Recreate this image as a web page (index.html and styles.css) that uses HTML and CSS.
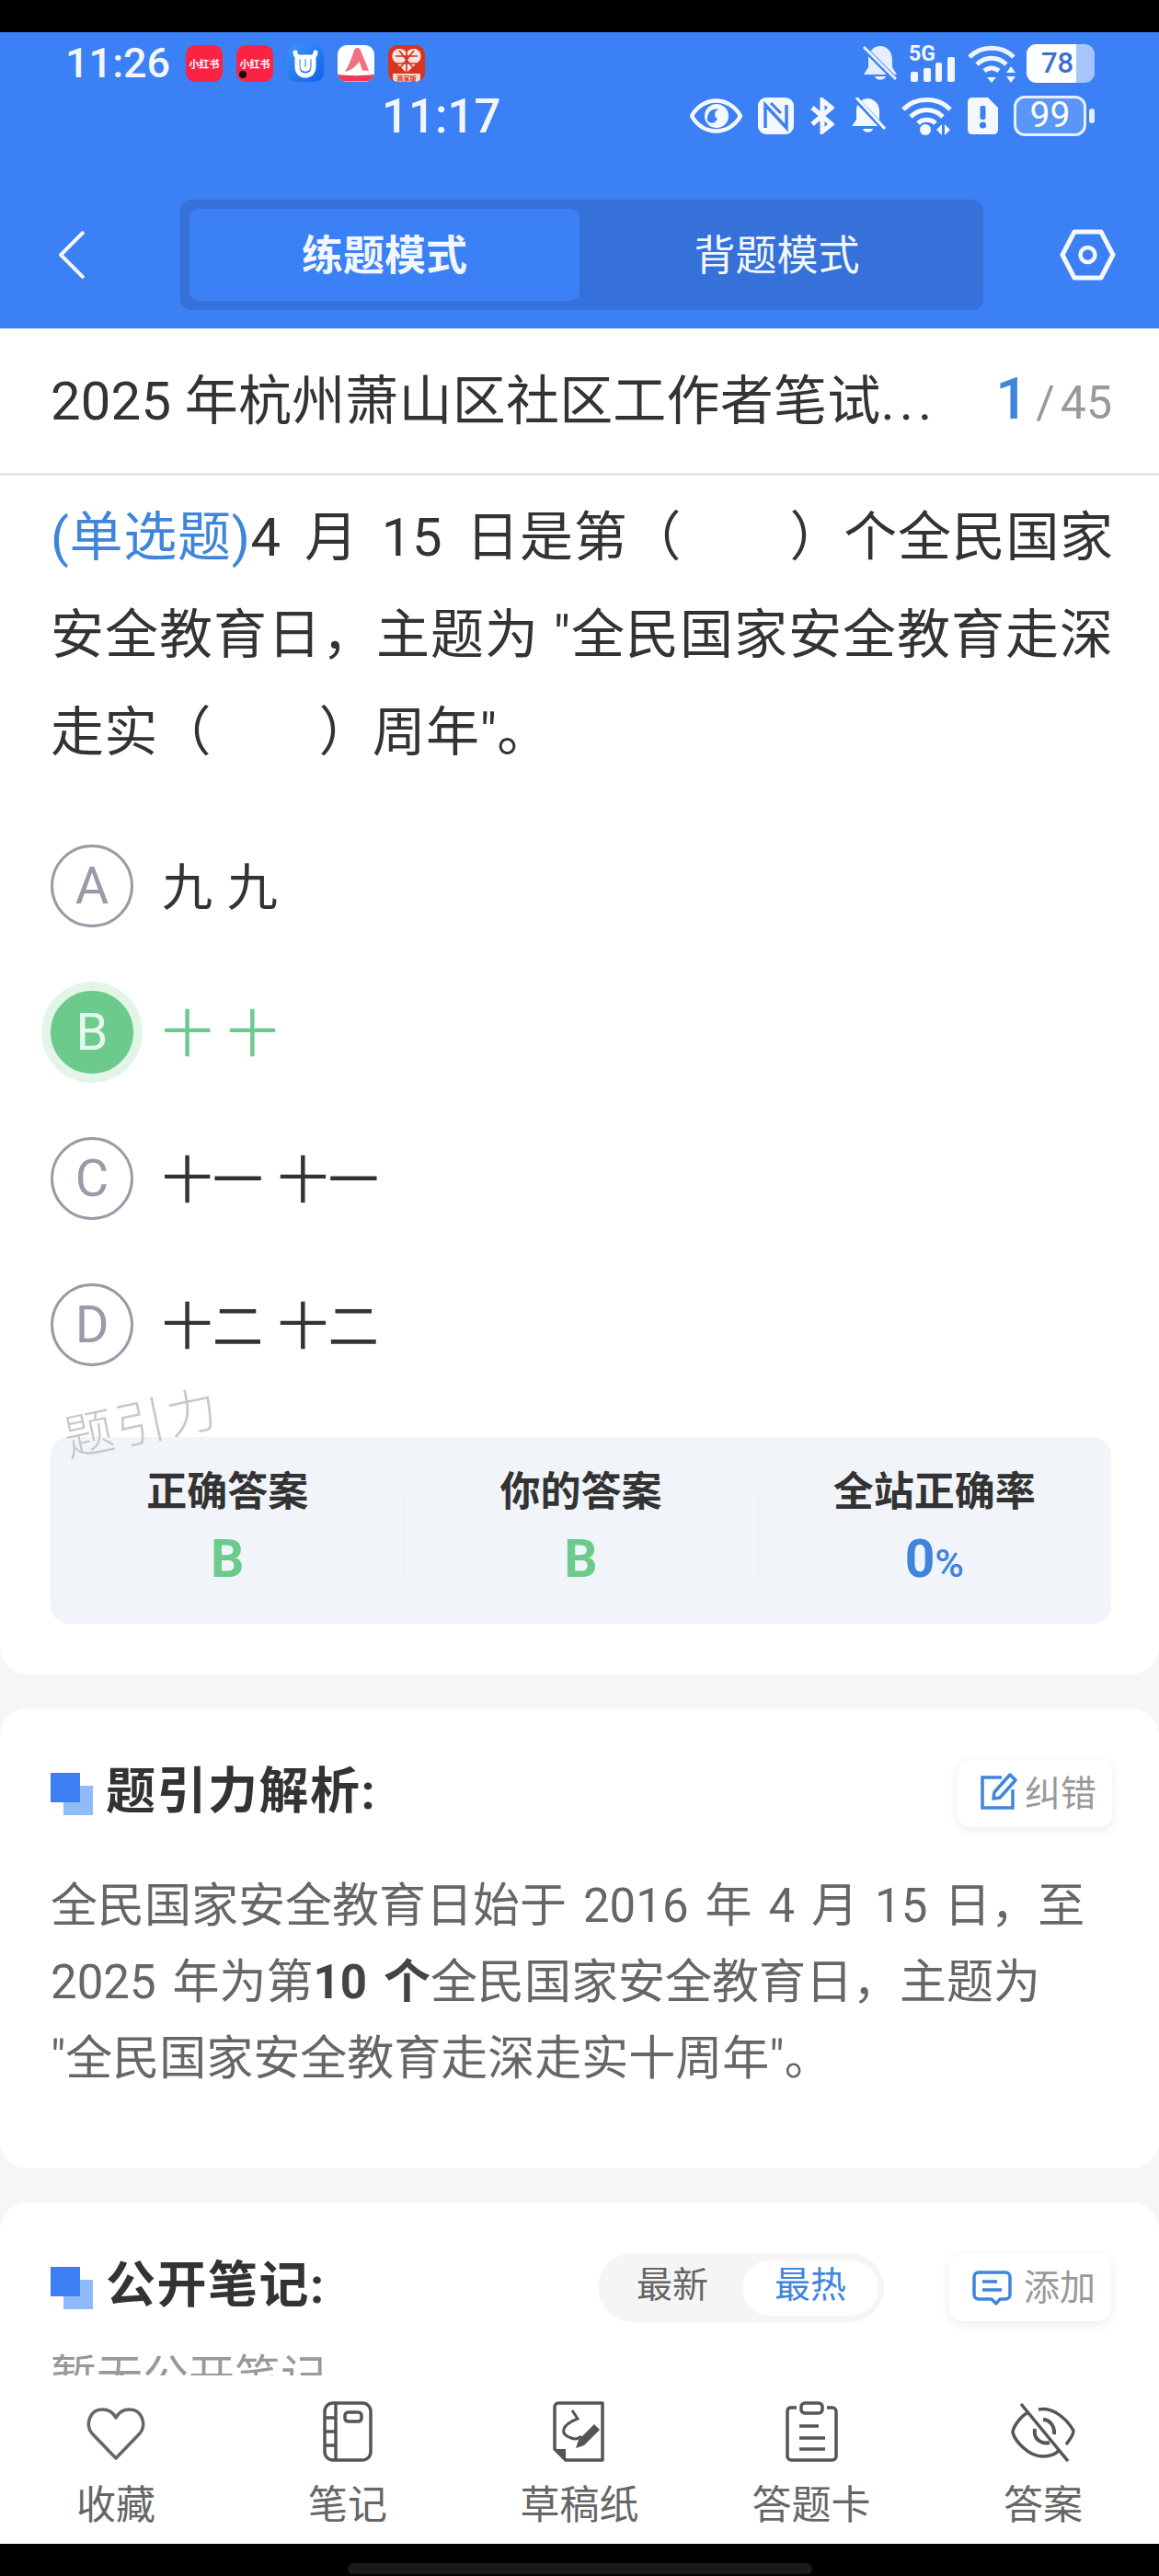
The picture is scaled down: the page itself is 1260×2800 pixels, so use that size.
FILE: index.html
```html
<!DOCTYPE html>
<html lang="zh-CN">
<head>
  <meta charset="UTF-8">
  <meta name="viewport" content="width=device-width, initial-scale=1.0">
  <title>题引力</title>
  <link rel="stylesheet" href="styles.css">
</head>
<body>
  <div class="top-black"></div>

  <header class="header">
    <div class="status-row">
      <span class="time-big">11:26</span>
      <div class="app-icon app-red"><span>小红书</span></div>
      <div class="app-icon app-red"><span>小红书</span><i class="rec-dot"></i></div>
      <div class="app-icon app-blue">
        <svg width="40" height="40" viewBox="0 0 40 40"><path d="M9 8 C9 11 11 13 13 13 H27 C29 13 31 11 31 8 M11 12 V23 C11 30 15 33 20 33 C25 33 29 30 29 23 V12 M17 17 V24 C17 27 23 27 23 24 V17" fill="none" stroke="#fff" stroke-width="5" stroke-linecap="round"/></svg>
      </div>
      <div class="app-icon app-white">
        <svg width="41" height="40" viewBox="0 0 41 40"><path d="M8 29 C13 22 16 12 19 4 C21 2 24 2 25 4 L35 28 L28 28 L24 18 C21 23 15 28 8 29 Z" fill="#f2707f"/><path d="M0 32 C10 34 30 34 41 32 V40 H0 Z" fill="#f0395a"/></svg>
      </div>
      <div class="app-icon app-pdd">
        <svg width="40" height="40" viewBox="0 0 40 40"><path d="M20 30 L6 17 C2 11 6 4 12 4 C15 4 18 5 20 8 C22 5 25 4 28 4 C34 4 38 11 34 17 Z" fill="#fbe3de"/><path d="M20 6 V30 M8 12 H32 M8 20 H32 M12 6 L28 26 M28 6 L12 26" stroke="#d5301e" stroke-width="1.6"/><path d="M5 31 H35 V36 C35 38 33 40 31 40 H9 C7 40 5 38 5 36 Z" fill="#fbd9d3"/><text x="20" y="38.500" class="pdd-text">商家版</text></svg>
      </div>
      <div class="status-right">
        <svg width="38" height="40" viewBox="0 0 38 40"><path d="M19 1 C27 1 32 8 32 16 V24 L37 32 H1 L6 24 V14 C6 7 12 1 19 1 Z M13 34 H25 C24 39 14 39 13 34 Z" fill="#e6efff"/><path d="M1 3 L36 38" stroke="#3b80f5" stroke-width="6"/><path d="M1 2 L36 37" stroke="#e6efff" stroke-width="3"/></svg>
        <svg class="net-icon" width="52" height="40" viewBox="0 0 52 40"><text x="0" y="17" class="net-text">5G</text><rect x="2" y="29" width="8" height="11" rx="2"/><rect x="16" y="25" width="8" height="15" rx="2"/><rect x="29" y="19" width="7" height="21" rx="2"/><rect x="42" y="13" width="8" height="27" rx="2"/></svg>
        <svg width="52" height="42" viewBox="0 0 52 42"><path d="M2 14 C15 1 37 1 50 14 M10 22 C19 13 33 13 42 22" fill="none" stroke="#eef4ff" stroke-width="5"/><path d="M18 29 C23 25 29 25 34 29" fill="none" stroke="#eef4ff" stroke-width="5"/><path d="M21 36 H31 L26 42 Z M42 31 L47 24 L52 31 Z M42 35 H52 L47 42 Z" fill="#eef4ff"/></svg>
        <div class="batt-top"><span class="batt-fill">78</span></div>
      </div>
    </div>

    <div class="status-row status-row-2">
      <span class="time-mid">11:17</span>
      <div class="status-right status-right-2">
        <svg width="57" height="38" viewBox="0 0 57 38"><path d="M2 19 C14 -3 43 -3 55 19 C43 41 14 41 2 19 Z" fill="none" stroke="#f4f8ff" stroke-width="4.500"/><circle cx="29" cy="19" r="13" fill="#f4f8ff"/><path d="M19 24 C18 15 25 10 31 12 C26 14 26 20 30 22 C27 28 22 28 19 24 Z" fill="#3b80f5"/></svg>
        <svg width="39" height="40" viewBox="0 0 39 40"><rect width="39" height="40" rx="9" fill="#f4f8ff"/><path d="M8 33 V8 L31 33 V8" fill="none" stroke="#3b80f5" stroke-width="3.500"/><path d="M14 6 L25 17" stroke="#3b80f5" stroke-width="3"/></svg>
        <svg width="27" height="40" viewBox="0 0 27 40"><path d="M3 11 L24 29 L14 37 V3 L24 11 L3 29" fill="none" stroke="#f4f8ff" stroke-width="5"/></svg>
        <svg width="39" height="40" viewBox="0 0 39 40"><path d="M20 1 C28 2 32 8 32 15 V24 L37 31 H2 L7 24 V14 C7 7 12 1 20 1 Z M14 34 H25 C24 39 15 39 14 34 Z" fill="#f4f8ff"/><path d="M5 0 L39 36" stroke="#3b80f5" stroke-width="6"/><path d="M7 0 L38 34" stroke="#f4f8ff" stroke-width="3"/></svg>
        <svg width="55" height="42" viewBox="0 0 55 42"><path d="M2 14 C15 0 40 0 53 14 M10 22 C20 12 35 12 45 22 M18 29 C23 24 32 24 37 29" fill="none" stroke="#f4f8ff" stroke-width="5"/><circle cx="26" cy="36" r="6" fill="#f4f8ff"/><path d="M44 30 V42 L38 36 Z M47 30 V42 L53 36 Z" fill="#f4f8ff"/></svg>
        <svg width="33" height="40" viewBox="0 0 33 40"><path d="M5 0 H22 L33 11 V35 C33 38 31 40 28 40 H5 C2 40 0 38 0 35 V5 C0 2 2 0 5 0 Z" fill="#f4f8ff"/><rect x="13.500" y="9" width="6" height="15" rx="2" fill="#3b80f5"/><circle cx="16.500" cy="30" r="3.600" fill="#3b80f5"/></svg>
        <div class="batt-mid"><span>99</span></div>
        <i class="batt-nub"></i>
      </div>
    </div>

    <nav class="nav">
      <svg class="nav-back" width="28" height="52" viewBox="0 0 28 52"><path d="M27 1 L2 26 L27 51" fill="none" stroke="#f4f8ff" stroke-width="4"/></svg>
      <div class="mode-tabs">
        <div class="mode-tab mode-active">练题模式</div>
        <div class="mode-tab">背题模式</div>
      </div>
      <svg class="nav-gear" width="61" height="56" viewBox="0 0 61 56"><path d="M3 28 L16 3 H45 L58 28 L45 53 H16 Z" fill="none" stroke="#f4f8ff" stroke-width="5" stroke-linejoin="round"/><circle cx="30.500" cy="28" r="8" fill="none" stroke="#f4f8ff" stroke-width="4.500"/></svg>
    </nav>
  </header>

  <div class="title-bar">
    <span class="paper-title">2025 年杭州萧山区社区工作者笔试<span class="dots">...</span></span>
    <span class="counter"><b>1</b><em>/</em><span>45</span></span>
  </div>

  <main class="scroll">
    <section class="card card-question">
      <p class="question">
        <span class="q-line q-line-1"><span class="q-type">(单选题)</span>4 月 15 日是第（　　）个全民国家</span>
        <span class="q-line q-line-2">安全教育日，主题为 "全民国家安全教育走深</span>
        <span class="q-line q-line-3">走实（　　）周年"。</span>
      </p>

      <div class="options">
        <div class="option"><span class="opt-badge">A</span><span class="opt-text">九 九</span></div>
        <div class="option option-right"><span class="opt-badge">B</span><span class="opt-text">十 十</span></div>
        <div class="option"><span class="opt-badge">C</span><span class="opt-text">十一 十一</span></div>
        <div class="option"><span class="opt-badge">D</span><span class="opt-text">十二 十二</span></div>
      </div>

      <div class="stats">
        <span class="watermark">题引力</span>
        <div class="stat">
          <div class="stat-label">正确答案</div>
          <div class="stat-value green">B</div>
        </div>
        <div class="stat stat-line">
          <div class="stat-label">你的答案</div>
          <div class="stat-value green">B</div>
        </div>
        <div class="stat stat-line">
          <div class="stat-label">全站正确率</div>
          <div class="stat-value blue">0<small>%</small></div>
        </div>
      </div>
    </section>

    <section class="card card-analysis">
      <div class="card-head">
        <i class="squares"></i>
        <h2>题引力解析:</h2>
        <div class="chip">
          <svg width="40" height="40" viewBox="0 0 40 40"><path d="M23 5 H2 V38 H35 V18" fill="none" stroke="#3f85dc" stroke-width="3.500"/><path d="M15 21 L32 2 L38 8 L21 27 L14 28 Z" fill="none" stroke="#3f85dc" stroke-width="3.500" stroke-linejoin="round"/></svg>
          <span>纠错</span>
        </div>
      </div>
      <p class="analysis"><span class="a-line">全民国家安全教育日始于 2016 年 4 月 15 日，至</span><br><span class="a-line">2025 年为第<b>10 个</b>全民国家安全教育日，主题为</span><br>"全民国家安全教育走深走实十周年"。</p>
    </section>

    <section class="card card-notes">
      <div class="card-head card-head-notes">
        <i class="squares"></i>
        <h2>公开笔记:</h2>
        <div class="sort-pill">
          <span class="sort-item">最新</span>
          <span class="sort-item sort-active">最热</span>
        </div>
        <div class="chip chip-add">
          <svg width="43" height="38" viewBox="0 0 43 38"><path d="M7 2 H36 C39 2 41 4 41 7 V26 C41 29 39 31 36 31 H30 L26 36 L21 31 H7 C4 31 2 29 2 26 V7 C2 4 4 2 7 2 Z" fill="none" stroke="#3f85dc" stroke-width="3.500" stroke-linejoin="round"/><path d="M11 12 H27 M11 21 H32" stroke="#3f85dc" stroke-width="3.500"/></svg>
          <span>添加</span>
        </div>
      </div>
      <p class="empty">暂无公开笔记</p>
    </section>
  </main>

  <footer class="tabbar">
    <div class="tab-item">
      <svg width="70" height="66" viewBox="0 0 70 66"><path d="M35 62 L9 35 C1 25 7 9 20 9 C27 9 32 12 35 18 C38 12 43 9 50 9 C63 9 69 25 61 35 Z" fill="none" stroke="#666" stroke-width="3.500" stroke-linejoin="round"/></svg>
      <span>收藏</span>
    </div>
    <div class="tab-item">
      <svg width="70" height="66" viewBox="0 0 70 66"><rect x="10" y="2" width="50" height="62" rx="9" fill="none" stroke="#555" stroke-width="3.500"/><path d="M22 2 V64 M10 18 H22 M10 33 H22 M10 48 H22" stroke="#555" stroke-width="3.500"/><rect x="32" y="12" width="18" height="10" rx="3.500" fill="none" stroke="#555" stroke-width="3.500"/></svg>
      <span>笔记</span>
    </div>
    <div class="tab-item">
      <svg width="70" height="66" viewBox="0 0 70 66"><path d="M12 2 H60 V64 H20 L8 52 V6 C8 4 10 2 12 2 Z" fill="none" stroke="#555" stroke-width="3.500" stroke-linejoin="round"/><path d="M9 52 H20 V63 Z" fill="#555"/><path d="M27 10 L33 19 C15 26 13 36 26 40 C31 42 34 41 37 38" fill="none" stroke="#555" stroke-width="3"/><path d="M31 51 L34 42 L51 25 L57 31 L40 48 Z" fill="#555"/></svg>
      <span>草稿纸</span>
    </div>
    <div class="tab-item">
      <svg width="70" height="66" viewBox="0 0 70 66"><path d="M19 7 H13 C10 7 9 9 9 11 V60 C9 62 11 64 13 64 H58 C60 64 62 62 62 60 V11 C62 9 60 7 58 7 H52" fill="none" stroke="#555" stroke-width="3.500"/><rect x="24" y="2" width="23" height="11" rx="4" fill="none" stroke="#555" stroke-width="3.500"/><path d="M22 27 H43 M22 40 H50 M22 52 H50" stroke="#555" stroke-width="3.500"/></svg>
      <span>答题卡</span>
    </div>
    <div class="tab-item">
      <svg width="70" height="66" viewBox="0 0 70 66"><path d="M19 12 C8 18 2 30 2 34 C4 42 18 60 35 60 C43 60 49 57 53 53 M30 9 C45 6 60 18 68 32 C68 36 64 42 60 47" fill="none" stroke="#555" stroke-width="3.500"/><path d="M11 3 L62 65" stroke="#555" stroke-width="3.500"/><path d="M26 30 C24 42 34 47 42 45 M35 20 C42 20 48 27 47 36" fill="none" stroke="#555" stroke-width="4"/></svg>
      <span>答案</span>
    </div>
  </footer>

  <div class="bottom-black"><i class="home-bar"></i></div>
</body>
</html>
```

FILE: styles.css
```css
* {
  box-sizing: border-box;
}
body {
  margin: 0;
  width: 1260px;
  height: 2800px;
  overflow: hidden;
  display: flex;
  flex-direction: column;
  background-color: #f5f6f8;
  font-family: Roboto, "Noto Sans CJK SC", sans-serif;
  color: #333;
}
.top-black {
  height: 35px;
  background-color: #000;
}

/* header + status bars */
.header {
  height: 322px;
  padding-top: 13px;
  background-color: #3b80f5;
  color: #f2f7ff;
}
.status-row {
  display: flex;
  align-items: center;
  height: 41px;
  padding-left: 71px;
  padding-right: 70px;
}
.status-row-2 {
  height: 44px;
  margin-top: 15px;
}
.time-big {
  width: 131px;
  font-size: 45px;
  font-weight: 500;
  line-height: 40px;
}
.time-mid {
  margin-left: 344px;
  margin-top: 2px;
  font-size: 51px;
  font-weight: 500;
  line-height: 44px;
}
.app-icon {
  position: relative;
  display: flex;
  align-items: center;
  justify-content: center;
  width: 40px;
  height: 40px;
  margin-right: 15px;
  border-radius: 10px;
  overflow: hidden;
  font-size: 11px;
  font-weight: 700;
  color: #fff;
}
.app-red {
  background-color: #fb2343;
}
.app-blue {
  background: linear-gradient(135deg, #3f94f8, #0f62e8);
}
.app-white {
  background-color: #fff;
}
.app-pdd {
  background-color: #d8341f;
}
.pdd-text {
  font-size: 7px;
  text-anchor: middle;
  fill: #d5301e;
}
.rec-dot {
  position: absolute;
  left: 3px;
  bottom: 4px;
  width: 8px;
  height: 8px;
  border-radius: 50%;
  background-color: #111;
}
.status-right {
  display: flex;
  align-items: center;
  gap: 12px;
  margin-left: auto;
}
.status-right-2 {
  gap: 17px;
}
.net-icon {
  overflow: visible;
}
.net-text {
  font-size: 23px;
  font-weight: 700;
  fill: #f2f7ff;
}
.net-icon rect {
  fill: #f2f7ff;
}
.batt-top {
  width: 74px;
  height: 42px;
  border-radius: 11px;
  background-color: #a6c5fb;
  overflow: hidden;
}
.batt-fill {
  display: block;
  width: 54px;
  height: 42px;
  padding-left: 16px;
  background-color: #fff;
  font-size: 31px;
  font-weight: 500;
  line-height: 42px;
  color: #3a6fd0;
}
.batt-mid {
  width: 79px;
  height: 44px;
  margin-right: -13px;
  border: 3px solid #e6efff;
  border-radius: 12px;
  background-color: #5a96f6;
  text-align: center;
  font-size: 39px;
  line-height: 37px;
  color: #fff;
}
.batt-nub {
  width: 6px;
  height: 16px;
  margin-left: -1px;
  border-radius: 3px;
  background-color: #e6efff;
}
.nav {
  display: flex;
  align-items: center;
  margin-top: 69px;
  padding-left: 64px;
}
.nav-back {
  margin-right: 104px;
}
.nav-gear {
  margin-left: 83px;
}
.mode-tabs {
  display: grid;
  grid-template-columns: 424px 1fr;
  width: 873px;
  height: 120px;
  padding: 10px;
  border-radius: 12px;
  background-color: #3571d9;
}
.mode-tab {
  display: flex;
  align-items: center;
  justify-content: center;
  padding-bottom: 5px;
  font-size: 45px;
}
.mode-active {
  border-radius: 10px;
  background-color: #3b80f5;
  font-weight: 700;
}

/* paper title */
.title-bar {
  display: flex;
  align-items: center;
  justify-content: space-between;
  height: 160px;
  padding: 0 51px 10px 55px;
  border-bottom: 3px solid #e8e8e8;
  background-color: #fff;
}
.paper-title {
  font-size: 58px;
  letter-spacing: 0.2px;
}
.dots {
  letter-spacing: 5px;
}
.counter {
  display: flex;
  align-items: baseline;
  margin-top: 6px;
  color: #999;
  font-size: 50px;
}
.counter b {
  font-size: 63px;
  font-weight: 500;
  color: #3f85dc;
}
.counter em {
  margin: 0 6px 0 8px;
  font-style: normal;
}

/* scrolling content */
.scroll {
  flex: 1;
  overflow: hidden;
}
.card {
  margin-bottom: 37px;
  background-color: #fff;
  border-radius: 30px;
}
.card-question {
  padding: 14px 52px 55px 55px;
  border-radius: 0 0 30px 30px;
}
.question {
  margin: 0;
  font-size: 58px;
  line-height: 106px;
  white-space: nowrap;
}
.q-line {
  display: block;
}
.q-line-1 {
  letter-spacing: 0.7px;
  word-spacing: 10px;
}
.q-line-2 {
  letter-spacing: 1px;
}
.q-line-3 {
  letter-spacing: 0.3px;
}
.q-type {
  color: #3f85dc;
}
.options {
  display: flex;
  flex-direction: column;
  gap: 69px;
  margin-top: 69px;
}
.option {
  display: flex;
  align-items: center;
  gap: 31px;
  height: 90px;
}
.opt-text {
  margin-bottom: 6px;
  font-size: 55px;
  word-spacing: 2px;
}
.opt-badge {
  display: flex;
  align-items: center;
  justify-content: center;
  width: 90px;
  height: 90px;
  border: 3px solid #9a9aa8;
  border-radius: 50%;
  font-size: 56px;
  color: #9a9aa8;
}
.option-right {
  color: #6ccb8c;
}
.option-right .opt-badge {
  border-color: #6ccb8c;
  background-color: #6ccb8c;
  box-shadow: 0 0 0 10px #e3f5e9;
  color: #e6f8ec;
}
.stats {
  position: relative;
  display: grid;
  grid-template-columns: repeat(3, 1fr);
  height: 203px;
  margin-top: 77px;
  border-radius: 20px;
  background-color: #f1f5f9;
}
.watermark {
  position: absolute;
  left: 14px;
  top: -49px;
  font-size: 54px;
  font-weight: 300;
  line-height: 70px;
  letter-spacing: 3px;
  color: #c8c8c8;
  transform: rotate(-12deg);
}
.stat {
  padding-top: 31px;
  text-align: center;
}
.stat-line {
  background: linear-gradient(#e8edf2, #e8edf2) left 61px / 1px 90px no-repeat;
}
.stat-label {
  font-size: 44px;
  font-weight: 700;
  line-height: 58px;
}
.stat-value {
  margin-top: 14px;
  font-size: 57px;
  font-weight: 700;
  line-height: 60px;
}
.stat-value small {
  font-size: 43px;
  font-weight: 500;
}
.green {
  color: #6ccb8c;
}
.blue {
  color: #3f85dc;
}

/* analysis + notes */
.card-analysis {
  height: 500px;
  padding: 56px 51px 0 55px;
}
.card-notes {
  padding: 55px 52px 0 55px;
  margin-bottom: 0;
}
.card-head {
  display: flex;
  align-items: center;
  height: 73px;
}
.card-head-notes {
  height: 75px;
}
.squares {
  position: relative;
  width: 46px;
  height: 46px;
  margin-right: 14px;
}
.squares::before,
.squares::after {
  content: "";
  position: absolute;
  width: 32px;
  height: 32px;
}
.squares::before {
  right: 0;
  bottom: 0;
  background-color: #8fbbf8;
}
.squares::after {
  left: 0;
  top: 0;
  background-color: #3b7ff2;
}
.card-head h2 {
  margin: 0 0 14px;
  font-size: 54px;
  font-weight: 700;
  letter-spacing: 1.500px;
}
.chip {
  display: flex;
  align-items: center;
  gap: 8px;
  height: 73px;
  margin-left: auto;
  padding: 0 17px 0 25px;
  border-radius: 14px;
  background-color: #fff;
  box-shadow: 0 3px 12px rgba(0, 0, 0, 0.08);
  font-size: 39px;
  color: #999;
}
.chip span {
  margin-bottom: 8px;
}
.chip svg {
  margin-bottom: 6px;
}
.chip-add {
  margin-left: 71px;
  padding-left: 25px;
  gap: 13px;
}
.chip-add svg {
  margin-bottom: 0;
}
.analysis {
  margin: 44px 0 0;
  font-size: 51px;
  line-height: 83px;
  color: #666;
  white-space: nowrap;
}
.a-line {
  word-spacing: 5.300px;
}
.analysis b {
  color: #444;
}
.sort-pill {
  display: flex;
  align-items: center;
  width: 311px;
  height: 75px;
  margin-left: auto;
  padding: 0 6px 0 42px;
  border-radius: 38px;
  background-color: #f5f5f5;
  font-size: 39px;
  color: #666;
}
.sort-item {
  width: 115px;
  height: 60px;
  line-height: 54px;
}
.sort-active {
  width: 148px;
  border-radius: 30px;
  background-color: #fff;
  text-align: center;
  color: #3f85dc;
}
.empty {
  margin: 25px 0 0;
  font-size: 50px;
  line-height: 70px;
  color: #999;
}

/* bottom tabs */
.tabbar {
  display: grid;
  grid-template-columns: repeat(5, 1fr);
  height: 183px;
  padding-top: 28px;
  background-color: #fff;
}
.tab-item {
  display: flex;
  flex-direction: column;
  align-items: center;
  gap: 22px;
  font-size: 43px;
  line-height: 50px;
  color: #666;
}
.bottom-black {
  display: flex;
  align-items: flex-end;
  justify-content: center;
  height: 35px;
  padding-bottom: 2px;
  background-color: #000;
}
.home-bar {
  width: 505px;
  height: 12px;
  border-radius: 6px;
  background-color: #1a1a1a;
}
```
